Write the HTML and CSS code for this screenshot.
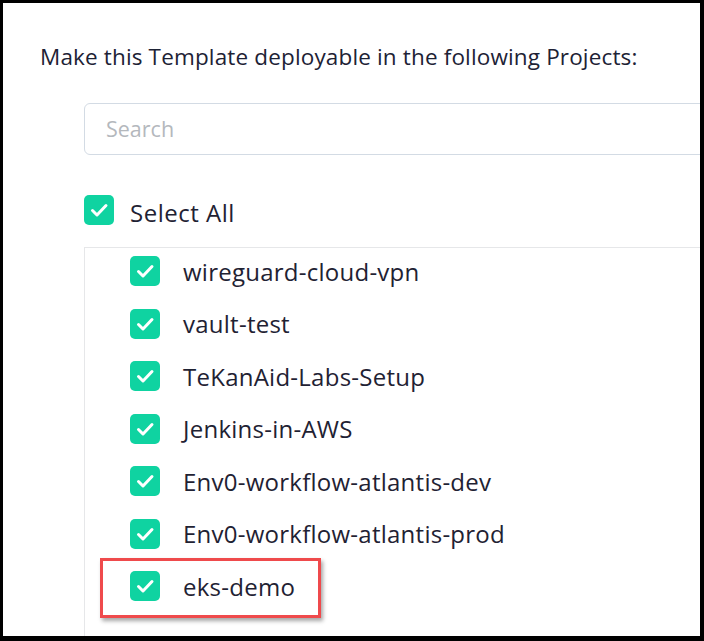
FILE: index.html
```html
<!DOCTYPE html>
<html>
<head>
<meta charset="utf-8">
<link rel="stylesheet" href="styles.css">
</head>
<body>
<div class="frame">
  <p class="title">Make this Template deployable in the following Projects:</p>
  <div class="search">Search</div>
  <div class="select-all">
    <span class="cb"><svg viewBox="0 0 30 30"><path d="M8.5 15.5 L13 20 L22 10.5"/></svg></span>
    <span class="label">Select All</span>
  </div>
  <div class="list">
    <div class="row"><span class="cb"><svg viewBox="0 0 30 30"><path d="M8.5 15.5 L13 20 L22 10.5"/></svg></span><span class="label">wireguard-cloud-vpn</span></div>
    <div class="row"><span class="cb"><svg viewBox="0 0 30 30"><path d="M8.5 15.5 L13 20 L22 10.5"/></svg></span><span class="label">vault-test</span></div>
    <div class="row"><span class="cb"><svg viewBox="0 0 30 30"><path d="M8.5 15.5 L13 20 L22 10.5"/></svg></span><span class="label">TeKanAid-Labs-Setup</span></div>
    <div class="row"><span class="cb"><svg viewBox="0 0 30 30"><path d="M8.5 15.5 L13 20 L22 10.5"/></svg></span><span class="label">Jenkins-in-AWS</span></div>
    <div class="row"><span class="cb"><svg viewBox="0 0 30 30"><path d="M8.5 15.5 L13 20 L22 10.5"/></svg></span><span class="label">Env0-workflow-atlantis-dev</span></div>
    <div class="row"><span class="cb"><svg viewBox="0 0 30 30"><path d="M8.5 15.5 L13 20 L22 10.5"/></svg></span><span class="label">Env0-workflow-atlantis-prod</span></div>
    <div class="row highlighted"><span class="cb"><svg viewBox="0 0 30 30"><path d="M8.5 15.5 L13 20 L22 10.5"/></svg></span><span class="label">eks-demo</span><span class="mark"></span></div>
  </div>
</div>
</body>
</html>
```
FILE: styles.css
```css
html, body {
  margin: 0;
  padding: 0;
  background: #000;
}
body {
  padding: 3px 4px 5px 3px;
  font-family: "Open Sans", Lato, sans-serif;
  color: #1f2233;
}
.frame {
  width: 697px;
  height: 633px;
  background: #fff;
  overflow: hidden;
  box-sizing: border-box;
  padding-left: 37px;
}
.title {
  margin: 0;
  padding-top: 42px;
  font-size: 22.5px;
  line-height: 24px;
  letter-spacing: 0.15px;
  color: #1d2235;
  white-space: nowrap;
}
.search {
  margin-top: 34px;
  margin-left: 44px;
  width: 700px;
  height: 52px;
  box-sizing: border-box;
  border: 1px solid #d3dbe4;
  border-radius: 6px;
  padding-left: 21px;
  font-size: 21.5px;
  line-height: 50px;
  color: #b4b8bd;
}
.select-all {
  margin-left: 44px;
  margin-top: 40px;
  display: flex;
  align-items: center;
  height: 30px;
}
.select-all .label {
  margin-left: 16px;
  padding-top: 4px;
  font-size: 24px;
  letter-spacing: 0.5px;
  color: #1f2233;
}
.cb {
  width: 30px;
  height: 30px;
  border-radius: 5px;
  background: #0fd3a1;
  flex: none;
  display: block;
}
.cb svg {
  width: 30px;
  height: 30px;
  display: block;
}
.cb path {
  fill: none;
  stroke: #fff;
  stroke-width: 3;
  stroke-linecap: round;
  stroke-linejoin: round;
}
.list {
  margin-left: 44px;
  margin-top: 22px;
  width: 700px;
  height: 500px;
  border-top: 1px solid #e6e7e9;
  border-left: 1px solid #e6e7e9;
  padding-top: 8px;
  padding-left: 45px;
  display: flex;
  flex-direction: column;
  gap: 22.5px;
}
.row {
  display: flex;
  align-items: center;
  height: 30px;
  position: relative;
}
.row .label {
  margin-left: 23px;
  font-size: 24px;
  letter-spacing: 0.25px;
  color: #1f2233;
}
.mark {
  position: absolute;
  left: -30px;
  top: -13px;
  width: 215px;
  height: 54px;
  border: 3px solid #ef4a4c;
  box-shadow: 2px 3px 4px rgba(0,0,0,0.35);
}
```
